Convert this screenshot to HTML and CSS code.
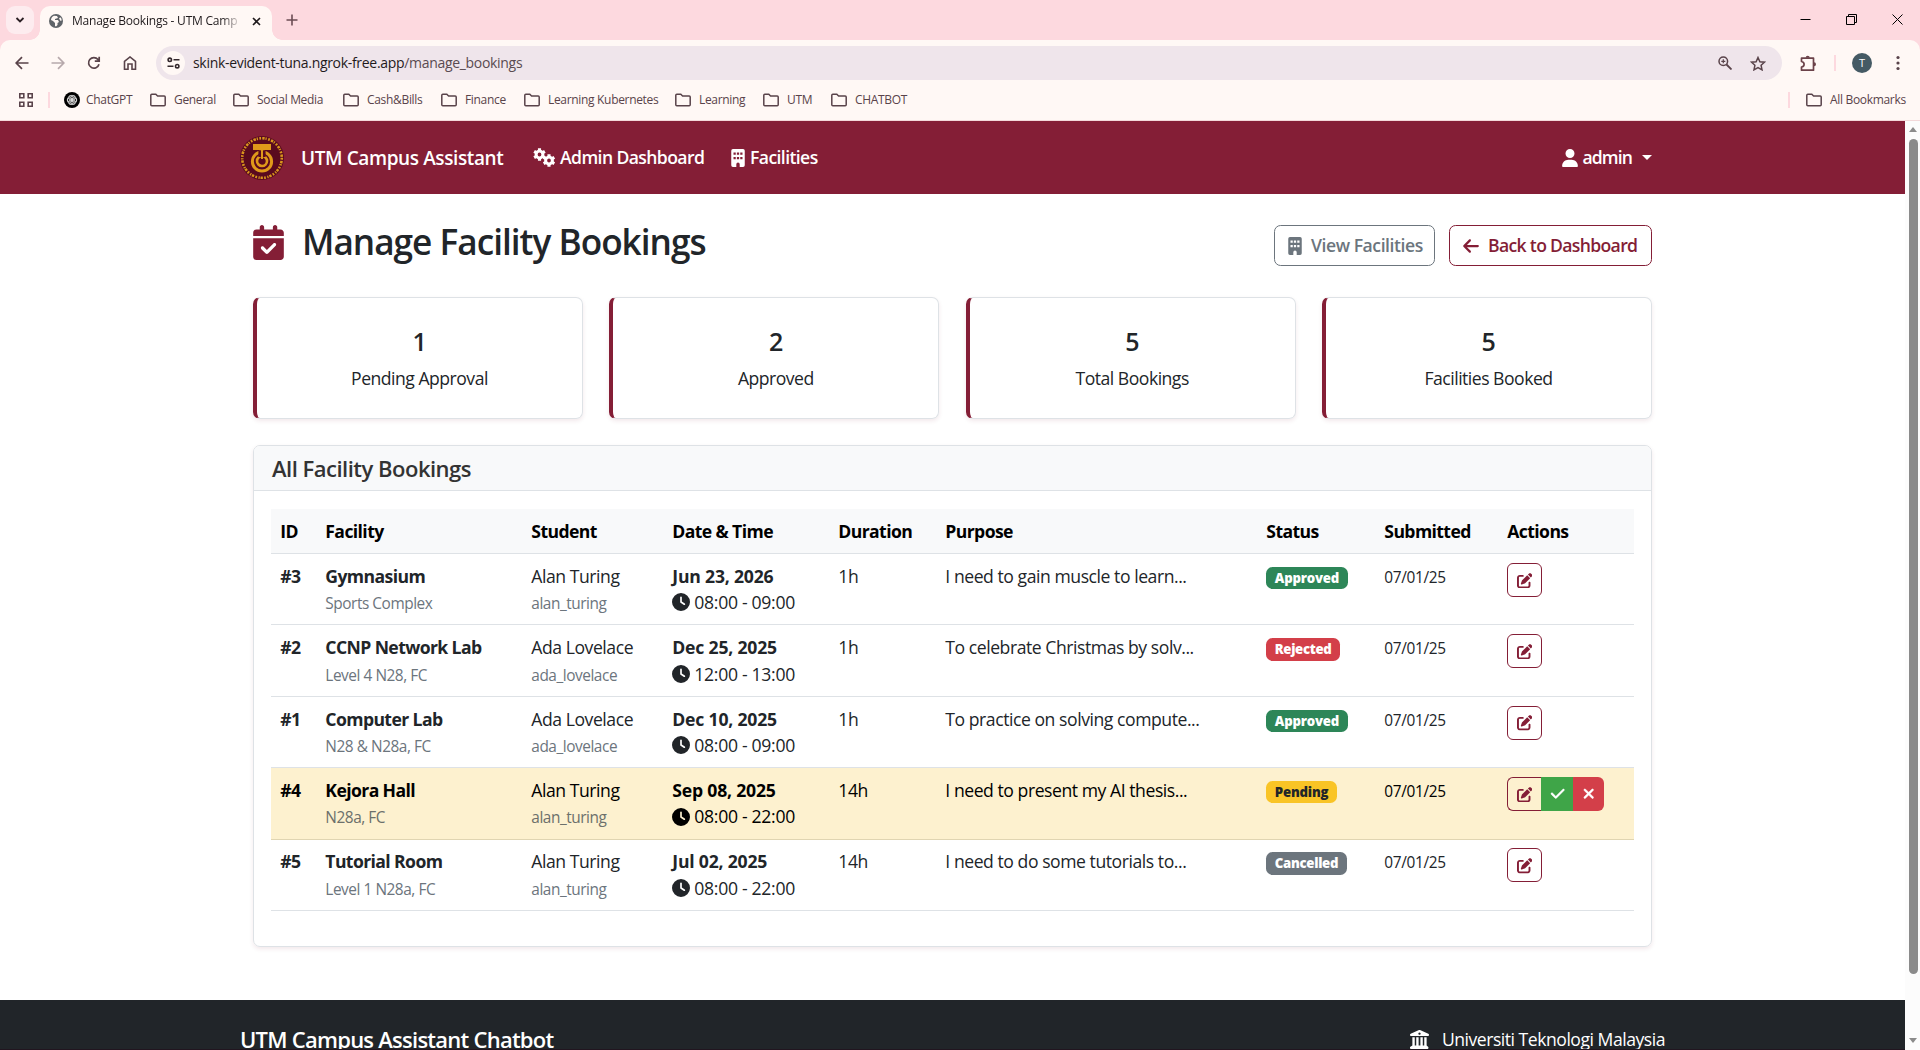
FILE: index.html
```html
<!DOCTYPE html>
<html lang="en">
<head>
<meta charset="utf-8">
<title>Manage Bookings - UTM Campus Assistant</title>
<link rel="stylesheet" href="styles.css">
</head>
<body>
<svg class="defs" aria-hidden="true">
  <symbol id="folder" viewBox="0 0 16 14"><path d="M.8 11.8V2.2q0-1 1-1h4l1.800 1.800h6.600q1 0 1 1v7.800q0 1-1 1H1.800q-1 0-1-1z" fill="none" stroke="currentColor" stroke-width="1.500"/></symbol>
  <symbol id="user" viewBox="0 0 448 512"><path d="M224 256A128 128 0 1 0 224 0a128 128 0 1 0 0 256zm-45.700 48C79.800 304 0 383.800 0 482.300C0 498.700 13.300 512 29.700 512l388.600 0c16.400 0 29.700-13.300 29.700-29.700C448 383.800 368.200 304 269.700 304l-91.400 0z"/></symbol>
  <symbol id="cal" viewBox="0 0 448 512"><path d="M128 0c17.700 0 32 14.300 32 32l0 32 128 0 0-32c0-17.700 14.300-32 32-32s32 14.300 32 32l0 32 48 0c26.500 0 48 21.500 48 48l0 48L0 160l0-48C0 85.500 21.500 64 48 64l48 0 0-32c0-17.700 14.300-32 32-32zM0 192l448 0 0 272c0 26.500-21.500 48-48 48L48 512c-26.500 0-48-21.500-48-48L0 192zM329 305c9.400-9.400 9.400-24.600 0-33.900s-24.600-9.400-33.900 0l-95 95-47-47c-9.400-9.400-24.600-9.400-33.900 0s-9.400 24.600 0 33.900l64 64c9.400 9.400 24.600 9.400 33.900 0L329 305z"/></symbol>
  <symbol id="clock" viewBox="0 0 512 512"><path d="M256 0a256 256 0 1 1 0 512A256 256 0 1 1 256 0zM232 120l0 136c0 8 4 15.500 10.700 20l96 64c11 7.400 25.900 4.400 33.300-6.700s4.400-25.900-6.700-33.300L280 243.200 280 120c0-13.300-10.700-24-24-24s-24 10.700-24 24z"/></symbol>
  <symbol id="edit" viewBox="0 0 512 512"><path d="M471.600 21.700c-21.900-21.900-57.300-21.900-79.200 0L362.300 51.700l97.900 97.900 30.100-30.100c21.900-21.900 21.900-57.300 0-79.200L471.600 21.700zm-299.200 220c-6.100 6.100-10.800 13.600-13.500 21.900l-29.600 88.800c-2.900 8.600-.6 18.100 5.800 24.600s15.900 8.700 24.600 5.800l88.800-29.600c8.200-2.700 15.700-7.400 21.900-13.500L437.700 172.300 339.700 74.300 172.400 241.700zM96 64C43 64 0 107 0 160L0 416c0 53 43 96 96 96l256 0c53 0 96-43 96-96l0-96c0-17.700-14.300-32-32-32s-32 14.300-32 32l0 96c0 17.700-14.300 32-32 32L96 448c-17.700 0-32-14.300-32-32l0-256c0-17.700 14.300-32 32-32l96 0c17.700 0 32-14.300 32-32s-14.300-32-32-32L96 64z"/></symbol>
  <symbol id="check" viewBox="0 0 448 512"><path d="M438.600 105.400c12.500 12.500 12.500 32.800 0 45.300l-256 256c-12.500 12.500-32.800 12.500-45.300 0l-128-128c-12.500-12.500-12.500-32.800 0-45.300s32.800-12.500 45.300 0L160 338.700 393.400 105.400c12.500-12.500 32.800-12.500 45.300 0z" stroke="currentColor" stroke-width="12"/></symbol>
  <symbol id="xmark" viewBox="0 0 384 512"><path d="M342.600 150.600c12.500-12.500 12.500-32.800 0-45.300s-32.800-12.500-45.300 0L192 210.700 86.600 105.400c-12.500-12.500-32.800-12.500-45.300 0s-12.500 32.800 0 45.300L146.700 256 41.400 361.400c-12.500 12.500-12.500 32.800 0 45.300s32.800 12.500 45.300 0L192 301.300 297.400 406.600c12.500 12.500 32.800 12.500 45.300 0s12.500-32.800 0-45.300L237.300 256 342.600 150.600z" stroke="currentColor" stroke-width="16"/></symbol>
  <symbol id="arrow" viewBox="0 0 448 512"><path d="M9.400 233.400c-12.500 12.500-12.500 32.800 0 45.300l160 160c12.500 12.500 32.800 12.500 45.300 0s12.500-32.800 0-45.300L109.200 288 416 288c17.700 0 32-14.300 32-32s-14.300-32-32-32l-306.700 0L214.600 118.600c12.500-12.500 12.500-32.800 0-45.300s-32.800-12.500-45.300 0l-160 160z"/></symbol>
  <symbol id="building" viewBox="0 0 384 512"><path fill-rule="evenodd" d="M48 0H336a48 48 0 0 1 48 48V464a48 48 0 0 1-48 48H240V432a48 48 0 0 0-96 0v80H48a48 48 0 0 1-48-48V48A48 48 0 0 1 48 0ZM64 96v64h64V96zM160 96v64h64V96zM256 96v64h64V96zM64 224v64h64v-64zM160 224v64h64v-64zM256 224v64h64v-64z"/></symbol>
  <symbol id="gear" viewBox="-10 -10 20 20"><circle r="5.200" fill="none" stroke="currentColor" stroke-width="4.600"/><g stroke="currentColor" stroke-width="4.800"><path d="M0-9.500V-5M0 9.500V5M-8.230-4.750L-4.330-2.500M8.230 4.750L4.330 2.500M8.230-4.750L4.330-2.500M-8.230 4.750L-4.330 2.500"/></g></symbol>
  <symbol id="columns" viewBox="0 0 512 512"><path fill-rule="evenodd" d="M243 3q13-6 26 0L494 98q18 9 18 30v8q0 24-24 24H24Q0 160 0 136v-8q0-21 18-30zM256 68a30 30 0 1 0 .1 0zM64 192h64v224h40V192h64v224h48V192h64v224h40V192h64v228l38 28q10 8 10 20v20q0 24-24 24H24Q0 512 0 488v-20q0-12 10-20l54-28z"/></symbol>
</svg>

<header class="browser">
  <div class="tabstrip">
    <div class="tabsearch"><svg width="10" height="8" viewBox="0 0 10 8"><path d="M1.500 2l3.500 3.500L8.500 2" fill="none" stroke="#2b2024" stroke-width="1.800"/></svg></div>
    <div class="tab">
      <svg class="globe" width="14" height="14" viewBox="0 0 14 14"><circle cx="7" cy="7" r="7" fill="#5f6368"/><path d="M2 6q0-3 3-4.300L8 2 9 4 6 5v1h3l1 2-1.500 1v2L7 12.500 6 12V9L4 7zM10 4l2-.5.8 3-1.600.2z" fill="#fff8f5"/></svg>
      <span class="tabtitle">Manage Bookings - UTM Camp</span>
      <svg width="9" height="9" viewBox="0 0 9 9"><path d="M1 1l7 7M8 1L1 8" stroke="#1f1a1c" stroke-width="1.600"/></svg>
    </div>
    <svg class="plus" width="12" height="12" viewBox="0 0 12 12"><path d="M6 .5v11M.5 6h11" stroke="#6b4b53" stroke-width="1.600"/></svg>
    <div class="winctl">
      <svg width="11" height="11" viewBox="0 0 11 11"><path d="M.5 5.500h10" stroke="#000"/></svg>
      <svg width="11" height="11" viewBox="0 0 11 11"><path d="M.5 2.500h8v8h-8zM2.500 2.500v-2h8v8h-2" fill="none" stroke="#000"/></svg>
      <svg width="11" height="11" viewBox="0 0 11 11"><path d="M.5.5l10 10M10.500.5l-10 10" stroke="#000"/></svg>
    </div>
  </div>
  <div class="toolbar">
    <div class="navicons">
      <svg width="14" height="14" viewBox="0 0 14 14"><path d="M13.500 7H1.500M7 1.200L1.200 7 7 12.800" fill="none" stroke="#59434a" stroke-width="1.700"/></svg>
      <svg width="14" height="14" viewBox="0 0 14 14"><path d="M.5 7h12M7 1.200L12.800 7 7 12.800" fill="none" stroke="#b7a9ac" stroke-width="1.700"/></svg>
      <svg width="14" height="14" viewBox="0 0 14 14"><path d="M12 8.200A5.300 5.300 0 1 1 11 3.500L12 4.800M12.200.8v4.400H7.800" fill="none" stroke="#59434a" stroke-width="1.700"/></svg>
      <svg width="14" height="14" viewBox="0 0 14 14"><path d="M1.500 13.200V5.500L7 1l5.500 4.500v7.700H9V8H5v5.200z" fill="none" stroke="#59434a" stroke-width="1.600"/></svg>
    </div>
    <div class="omnibox">
      <div class="site"><svg width="13" height="12" viewBox="0 0 13 12" fill="none" stroke="#33282c" stroke-width="1.600"><circle cx="2.800" cy="2.800" r="1.700"/><path d="M6.500 2.800h6M.5 9.200h6"/><circle cx="10.200" cy="9.200" r="1.700"/></svg></div>
      <span class="url">skink-evident-tuna.ngrok-free.app<span class="path">/manage_bookings</span></span>
      <svg class="mag" width="14" height="14" viewBox="0 0 14 14" fill="none" stroke="#59434a"><circle cx="5.300" cy="5.300" r="4.300" stroke-width="1.500"/><path d="M8.500 8.500l5 5" stroke-width="1.800"/><path d="M5.300 3.300v4M3.300 5.300h4" stroke-width="1.200"/></svg>
      <svg class="star" width="16" height="15" viewBox="0 0 16 15"><path d="M8 1.500l1.900 4.200 4.600.5-3.400 3.100.9 4.500-4-2.300-4 2.300.9-4.500L1.500 6.200l4.600-.5z" fill="none" stroke="#59434a" stroke-width="1.500"/></svg>
    </div>
    <svg class="puzzle" width="17" height="17" viewBox="0 0 17 17"><path d="M1.500 3.200h12v12h-12V12q2.600-.3 2.600-2.700T1.500 6.500z" fill="none" stroke="#6b4249" stroke-width="1.700" stroke-linejoin="round"/><path d="M5.700 2.800a2 2 0 0 1 4 0zM14 7.200a2 2 0 0 1 0 4z" fill="#6b4249"/></svg>
    <i class="sep"></i>
    <span class="avatar">T</span>
    <svg class="dots" width="4" height="16" viewBox="0 0 4 16" fill="#59434a"><circle cx="2" cy="2.500" r="1.600"/><circle cx="2" cy="8" r="1.600"/><circle cx="2" cy="13.500" r="1.600"/></svg>
  </div>
  <nav class="bookmarks">
    <svg class="apps" width="14" height="14" viewBox="0 0 14 14" fill="none" stroke="#59434a" stroke-width="1.600"><path d="M.8.8h4v4h-4zM9.200.8h4v4h-4zM.8 9.200h4v4h-4zM9.200 9.200h4v4h-4z"/></svg>
    <i class="sep"></i>
    <span class="bm gpt"><svg width="16" height="16" viewBox="-8 -8 16 16"><circle r="8" fill="#000"/><g fill="none" stroke="#ddd" stroke-width=".8"><ellipse cx="0" cy="-2" rx="3.300" ry="2.700"/><ellipse cx="0" cy="-2" rx="3.300" ry="2.700" transform="rotate(60)"/><ellipse cx="0" cy="-2" rx="3.300" ry="2.700" transform="rotate(120)"/><ellipse cx="0" cy="-2" rx="3.300" ry="2.700" transform="rotate(180)"/><ellipse cx="0" cy="-2" rx="3.300" ry="2.700" transform="rotate(240)"/><ellipse cx="0" cy="-2" rx="3.300" ry="2.700" transform="rotate(300)"/></g></svg>ChatGPT</span>
    <span class="bm w1"><svg width="16" height="14"><use href="#folder"/></svg>General</span>
    <span class="bm w2"><svg width="16" height="14"><use href="#folder"/></svg>Social Media</span>
    <span class="bm w3"><svg width="16" height="14"><use href="#folder"/></svg>Cash&amp;Bills</span>
    <span class="bm w4"><svg width="16" height="14"><use href="#folder"/></svg>Finance</span>
    <span class="bm w5"><svg width="16" height="14"><use href="#folder"/></svg>Learning Kubernetes</span>
    <span class="bm w6"><svg width="16" height="14"><use href="#folder"/></svg>Learning</span>
    <span class="bm w7"><svg width="16" height="14"><use href="#folder"/></svg>UTM</span>
    <span class="bm w8"><svg width="16" height="14"><use href="#folder"/></svg>CHATBOT</span>
    <i class="sep right"></i>
    <span class="bm all"><svg width="16" height="14"><use href="#folder"/></svg>All Bookmarks</span>
  </nav>
</header>

<div class="viewport">
  <div class="page">
    <nav class="navbar">
      <svg class="logo" width="44" height="44" viewBox="-22 -22 44 44"><circle r="22" fill="#5a0a1e"/><circle r="19.800" fill="none" stroke="#d9951d" stroke-width="2.600" stroke-dasharray="1.700 1.300 2.400 .9 1.200 1.500"/><path d="M-9-14H9v6H-9z" fill="#e09a1a"/><circle cy="3.500" r="9.600" fill="none" stroke="#e09a1a" stroke-width="3"/><circle cy="3" r="5" fill="none" stroke="#e09a1a" stroke-width="2.600"/><path d="M-3.600-7H3.600V-1H-3.600z" fill="#5a0a1e"/><path d="M-1-9H1V1H-1z" fill="#e09a1a"/></svg>
      <a class="brand">UTM Campus Assistant</a>
      <a class="link dash"><svg width="22" height="19" viewBox="0 0 22 19"><use href="#gear" x="0" y="0" width="13" height="13"/><use href="#gear" x="9.500" y="6" width="13" height="13"/></svg>Admin Dashboard</a>
      <a class="link fac"><svg width="14" height="18"><use href="#building"/></svg>Facilities</a>
      <a class="link admin"><svg width="16" height="18"><use href="#user"/></svg>admin<i class="caret"></i></a>
    </nav>

    <main class="content">
      <div class="titlebar">
        <h1><svg width="31" height="35"><use href="#cal"/></svg><span>Manage Facility Bookings</span></h1>
        <div class="buttons">
          <a class="btn gray"><svg width="14" height="18"><use href="#building"/></svg><span>View Facilities</span></a>
          <a class="btn red"><svg width="16" height="18"><use href="#arrow"/></svg><span>Back to Dashboard</span></a>
        </div>
      </div>

      <section class="stats">
        <div class="stat"><b>1</b><span>Pending Approval</span></div>
        <div class="stat"><b>2</b><span>Approved</span></div>
        <div class="stat"><b>5</b><span>Total Bookings</span></div>
        <div class="stat"><b>5</b><span>Facilities Booked</span></div>
      </section>

      <section class="card">
        <h2>All Facility Bookings</h2>
        <div class="body">
          <table>
            <colgroup><col class="c1"><col class="c2"><col class="c3"><col class="c4"><col class="c5"><col class="c6"><col class="c7"><col class="c8"><col class="c9"></colgroup>
            <thead><tr><th>ID</th><th>Facility</th><th>Student</th><th>Date &amp; Time</th><th>Duration</th><th>Purpose</th><th>Status</th><th>Submitted</th><th>Actions</th></tr></thead>
            <tbody>
              <tr><td><b>#3</b></td><td><b>Gymnasium</b><small>Sports Complex</small></td><td>Alan Turing<small>alan_turing</small></td><td><b class="date">Jun 23, 2026</b><span class="time"><svg><use href="#clock"/></svg>08:00 - 09:00</span></td><td>1h</td><td>I need to gain muscle to learn...</td><td><span class="badge ok">Approved</span></td><td class="sub">07/01/25</td><td><div class="acts"><a class="edit"><svg><use href="#edit"/></svg></a></div></td></tr>
              <tr><td><b>#2</b></td><td><b>CCNP Network Lab</b><small>Level 4 N28, FC</small></td><td>Ada Lovelace<small>ada_lovelace</small></td><td><b class="date">Dec 25, 2025</b><span class="time"><svg><use href="#clock"/></svg>12:00 - 13:00</span></td><td>1h</td><td>To celebrate Christmas by solv...</td><td><span class="badge no">Rejected</span></td><td class="sub">07/01/25</td><td><div class="acts"><a class="edit"><svg><use href="#edit"/></svg></a></div></td></tr>
              <tr><td><b>#1</b></td><td><b>Computer Lab</b><small>N28 &amp; N28a, FC</small></td><td>Ada Lovelace<small>ada_lovelace</small></td><td><b class="date">Dec 10, 2025</b><span class="time"><svg><use href="#clock"/></svg>08:00 - 09:00</span></td><td>1h</td><td>To practice on solving compute...</td><td><span class="badge ok">Approved</span></td><td class="sub">07/01/25</td><td><div class="acts"><a class="edit"><svg><use href="#edit"/></svg></a></div></td></tr>
              <tr class="warn"><td><b>#4</b></td><td><b>Kejora Hall</b><small>N28a, FC</small></td><td>Alan Turing<small>alan_turing</small></td><td><b class="date">Sep 08, 2025</b><span class="time"><svg><use href="#clock"/></svg>08:00 - 22:00</span></td><td>14h</td><td>I need to present my AI thesis...</td><td><span class="badge wait">Pending</span></td><td class="sub">07/01/25</td><td><div class="acts group"><a class="edit"><svg><use href="#edit"/></svg></a><a class="yes"><svg><use href="#check"/></svg></a><a class="nope"><svg><use href="#xmark"/></svg></a></div></td></tr>
              <tr><td><b>#5</b></td><td><b>Tutorial Room</b><small>Level 1 N28a, FC</small></td><td>Alan Turing<small>alan_turing</small></td><td><b class="date">Jul 02, 2025</b><span class="time"><svg><use href="#clock"/></svg>08:00 - 22:00</span></td><td>14h</td><td>I need to do some tutorials to...</td><td><span class="badge off">Cancelled</span></td><td class="sub">07/01/25</td><td><div class="acts"><a class="edit"><svg><use href="#edit"/></svg></a></div></td></tr>
            </tbody>
          </table>
        </div>
      </section>
    </main>

    <footer class="footer">
      <h3>UTM Campus Assistant Chatbot</h3>
      <p><svg width="19" height="19"><use href="#columns"/></svg><span>Universiti Teknologi Malaysia</span></p>
    </footer>
  </div>
  <div class="scrollbar"><i class="up"></i><i class="thumb"></i><i class="down"></i></div>
</div>
</body>
</html>
```
FILE: styles.css
```css
* { box-sizing: border-box; }
body { margin: 0; width: 1920px; height: 1050px; overflow: hidden; font-family: "Open Sans", "Noto Sans", sans-serif; font-size: 17.6px; line-height: 26.4px; letter-spacing: -0.5px; color: #212529; background: #fff; display: flex; flex-direction: column; white-space: nowrap; }
svg { flex: none; display: block; }
svg:not([fill]) { fill: currentColor; }
.defs { width: 0; height: 0; position: absolute; }

/* browser frame */
.browser { height: 121px; flex: none; background: #fdd9df; border-bottom: 1px solid #f3d9da; font-size: 12px; line-height: 16px; letter-spacing: -0.32px; color: #59434a; }
.tabstrip { height: 40px; display: flex; align-items: flex-start; padding: 6px 16px 0 6px; }
.tabsearch { width: 28px; height: 28px; border-radius: 9px; background: #fdecef; display: grid; place-items: center; margin-right: 6px; }
.tab { width: 232px; height: 34px; border-radius: 10px 10px 0 0; background: #fff8f5; display: flex; align-items: center; padding: 0 11px 4px 9px; position: relative; }
.tab::before, .tab::after { content: ""; position: absolute; bottom: 0; width: 10px; height: 10px; }
.tab::before { left: -10px; background: radial-gradient(circle at 0 0, transparent 9.5px, #fff8f5 10px); }
.tab::after { right: -10px; background: radial-gradient(circle at 100% 0, transparent 9.5px, #fff8f5 10px); }
.tabtitle { width: 170px; margin-left: 9px; margin-right: 10px; overflow: hidden; color: #1f1a1c; letter-spacing: -0.22px; -webkit-mask-image: linear-gradient(90deg, #000 150px, transparent 170px); mask-image: linear-gradient(90deg, #000 150px, transparent 170px); }
.plus { margin: 8px 0 0 14px; }
.winctl { margin: 8px 1px 0 auto; display: flex; gap: 35px; }
.toolbar { height: 46px; background: #fff8f5; border-radius: 10px 10px 0 0; display: flex; align-items: center; padding-left: 15px; }
.navicons { display: flex; gap: 22px; width: 141px; }
.omnibox { width: 1626px; height: 34px; border-radius: 17px; background: #efe5eb; display: flex; align-items: center; padding: 0 16px 0 5px; }
.site { width: 24px; height: 24px; border-radius: 50%; background: #fff8f5; display: grid; place-items: center; margin-right: 8px; }
.url { font-size: 14px; color: #1f1a1c; letter-spacing: -0.31px; }
.path { color: #5a4b51; }
.mag { margin-left: auto; margin-right: 18px; }
.puzzle { margin-left: 18px; }
.sep { width: 2px; height: 16px; background: #fdd9df; flex: none; }
.toolbar .sep { margin: 0 16px 0 17px; }
.avatar { width: 20px; height: 20px; border-radius: 50%; background: #455a64; color: #fff; font-size: 11px; line-height: 20px; text-align: center; letter-spacing: 0; }
.dots { margin-left: 24px; }
.bookmarks { height: 34px; background: #fff8f5; display: flex; align-items: center; padding: 0 15px 6px 19px; }
.bookmarks .sep { margin: 0 14px 0 15px; }
.bm { display: flex; align-items: center; flex: none; }
.bm svg { margin-right: 8px; }
.gpt { width: 86px; } .gpt svg { margin-right: 6px; }
.w1 { width: 83px; } .w2 { width: 110px; } .w3 { width: 98px; } .w4 { width: 83px; } .w5 { width: 151px; } .w6 { width: 88px; } .w7 { width: 68px; } .w8 { width: 90px; }
.bookmarks .sep.right { margin: 0 16px 0 auto; }
.all { width: 99px; }

/* page */
.viewport { flex: 1; display: flex; min-height: 0; }
.page { width: 1905px; overflow: hidden; border-bottom: 1px solid #21151f; }
.scrollbar { width: 15px; background: #fcfcfc; display: flex; flex-direction: column; align-items: center; padding: 6px 0 7px 1px; }
.up, .down { border: 4.5px solid transparent; width: 0; height: 0; flex: none; }
.up { border-top: 0; border-bottom: 5px solid #8b8b8b; }
.down { border-bottom: 0; border-top: 5px solid #8b8b8b; margin-top: auto; }
.thumb { width: 9px; height: 835px; border-radius: 5px; background: #8b8b8b; margin-top: 7px; }

.navbar { height: 73px; background: #841e36; color: #fff; display: flex; align-items: center; padding: 0 253px 0 240px; font-weight: 600; letter-spacing: -0.6px; }
.logo { margin-right: 17px; }
.brand { font-size: 19px; width: 232px; letter-spacing: -0.4px; padding-top: 1px; }
.link { display: flex; align-items: center; }
.link svg { margin-right: 5px; }
.dash { width: 198px; }
.link.admin { margin-left: auto; letter-spacing: -0.9px; }
.admin svg { margin-right: 4px; }
.caret { border: 5px solid transparent; border-top-color: #fff; border-bottom: 0; margin-left: 10px; }

.content { width: 1399px; margin-left: 253px; padding-top: 31px; height: 806px; }
.titlebar { display: flex; justify-content: space-between; height: 41px; }
h1 { margin: 0; display: flex; align-items: center; font-size: 35.2px; line-height: 38px; font-weight: 600; letter-spacing: -1px; height: 34px; gap: 18px; }
h1 svg { color: #841e36; }
h1 span { padding-bottom: 2px; }
.buttons { display: flex; gap: 14px; }
.btn { height: 41px; border: 1px solid; border-radius: 6.6px; display: flex; align-items: center; padding-left: 13px; font-weight: 600; }
.gray { width: 161px; color: #6c757d; gap: 9px; letter-spacing: -0.45px; }
.red { width: 203px; color: #841e36; gap: 9px; letter-spacing: -0.67px; }
.stats { display: grid; grid-template-columns: repeat(4, 1fr); gap: 26.4px; margin-top: 31px; }
.stat { height: 122px; border: 1px solid #dee2e6; border-left: 4px solid #841e36; border-radius: 7px; box-shadow: 0 2px 4px rgba(132, 30, 54, .1); text-align: center; display: flex; flex-direction: column; padding-top: 27px; }
.stat b { font-size: 25px; line-height: 32px; font-weight: 600; margin-bottom: 8px; }
.card { margin-top: 26px; height: 502px; border: 1px solid #dee2e6; border-radius: 7px; box-shadow: 0 2px 4px rgba(132, 30, 54, .1); }
h2 { margin: 0; height: 45px; line-height: 45px; font-size: 22px; font-weight: 600; letter-spacing: -0.5px; padding-left: 18px; background: #f8f9fa; border-bottom: 1px solid #dee2e6; border-radius: 6px 6px 0 0; color: #333; }
.body { padding: 18px 17px 0; }
table { width: 1363px; border-collapse: separate; border-spacing: 0; table-layout: fixed; }
.c1 { width: 45px; } .c2 { width: 206px; } .c3 { width: 141px; } .c4 { width: 166px; } .c5 { width: 107px; } .c6 { width: 321px; } .c7 { width: 118px; } .c8 { width: 123px; } .c9 { width: 136px; }
th { height: 45px; padding: 0 8.8px 0 9.3px; text-align: left; font-weight: 700; background: #f8f9fa; border-bottom: 1px solid #dee2e6; color: #000; letter-spacing: -0.6px; }
td { height: 71.4px; padding: 8.8px 8.8px 0 9.3px; vertical-align: top; border-bottom: 1px solid #dee2e6; letter-spacing: -0.45px; }
td b { display: block; letter-spacing: -0.6px; }
td b.date { letter-spacing: -0.2px; }
small { display: block; font-size: 15.4px; color: #6c757d; padding-top: 2px; letter-spacing: -0.45px; }
.time { display: flex; align-items: center; gap: 4px; letter-spacing: -0.3px; }
.time svg { width: 18px; height: 18px; }
.sub { font-size: 15.4px; padding-top: 10.8px; letter-spacing: -0.35px; }
.warn td { background: #fdf1cf; border-color: #e0d5b2; color: #000; }
.warn small { color: #6c706b; }
.badge { display: block; width: max-content; height: 22.5px; margin-top: 4px; border-radius: 6.6px; padding: 0 8.5px; font-size: 13.2px; line-height: 23px; font-weight: 800; color: #fff; letter-spacing: -0.2px; }
.ok { background: #2d8658; } .no { background: #d33f49; letter-spacing: -0.35px; } .wait { background: #f9c426; color: #212529; } .off { background: #6c757d; letter-spacing: -0.3px; }
.acts { display: flex; height: 34px; }
.acts a { display: grid; place-items: center; height: 34px; }
.acts svg { width: 15.4px; height: 15.4px; }
.edit { width: 35px; border: 1px solid #841e36; border-radius: 6px; color: #841e36; padding-top: 1px; }
.group .edit { width: 34px; border-right: 0; border-radius: 6px 0 0 6px; }
.yes { width: 32px; background: #3fa548; color: #fff; }
.nope { width: 31px; background: #d33f49; color: #fff; border-radius: 0 6px 6px 0; }

.footer { height: 100px; background: #212529; color: #fff; display: flex; justify-content: space-between; padding: 25px 240px 0 240px; }
h3 { margin: 0; font-size: 22px; line-height: 28px; font-weight: 600; letter-spacing: -0.75px; }
.footer p { margin: 0; display: flex; align-items: center; gap: 13px; height: 28px; letter-spacing: -0.48px; }
```
